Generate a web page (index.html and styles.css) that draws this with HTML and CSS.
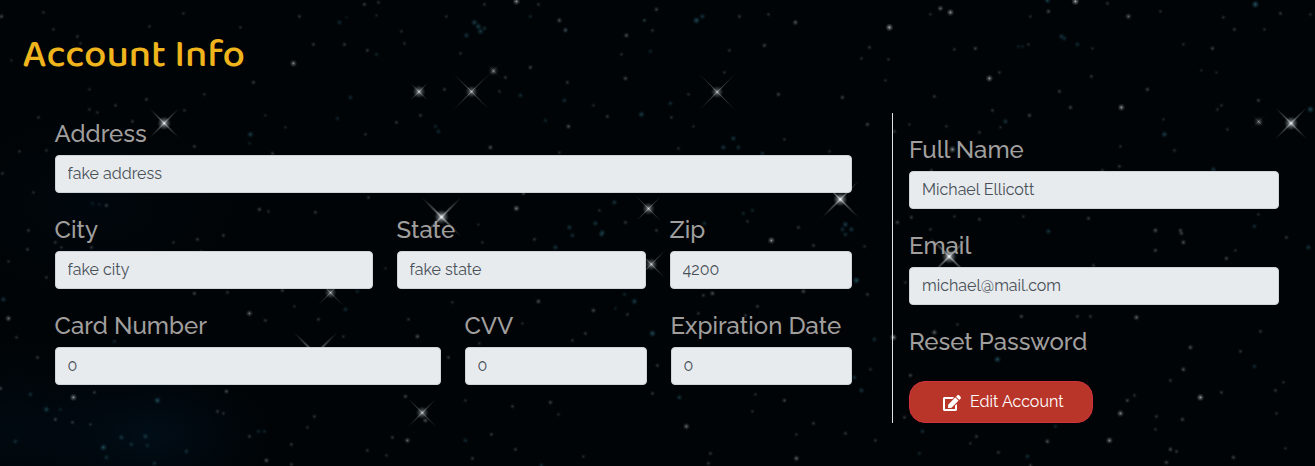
FILE: index.html
```html
<!DOCTYPE html>
<html lang="en">
<head>
<meta charset="utf-8">
<title>Account Info</title>
<link rel="stylesheet" href="styles.css">
</head>
<body>
<svg class="sky" id="sky" width="1315" height="466" viewBox="0 0 1315 466" aria-hidden="true">
  <defs>
    <radialGradient id="glow"><stop offset="0" stop-color="#fff"/><stop offset=".3" stop-color="#ccd4d8" stop-opacity=".55"/><stop offset="1" stop-color="#8a9499" stop-opacity="0"/></radialGradient>
    <radialGradient id="teal"><stop offset="0" stop-color="#357585"/><stop offset=".5" stop-color="#235564" stop-opacity=".5"/><stop offset="1" stop-color="#1d4d60" stop-opacity="0"/></radialGradient>
    <radialGradient id="spike"><stop offset="0" stop-color="#fff"/><stop offset=".4" stop-color="#aab0b4" stop-opacity=".5"/><stop offset="1" stop-color="#8a9094" stop-opacity="0"/></radialGradient>
    <radialGradient id="haze"><stop offset="0" stop-color="#031c30" stop-opacity=".4"/><stop offset="1" stop-color="#031525" stop-opacity="0"/></radialGradient>
  </defs>
  <ellipse cx="150" cy="435" rx="120" ry="75" fill="url(#haze)"/>
  <ellipse cx="15" cy="430" rx="120" ry="90" fill="url(#haze)" opacity=".6"/>
  <ellipse cx="90" cy="205" rx="150" ry="90" fill="url(#haze)" opacity=".35"/>
</svg>
<main class="account">
  <h1 class="title">Account Info</h1>
  <div class="columns">
    <form class="billing">
      <div class="row">
        <label class="field"><span class="label">Address</span><input class="control" value="fake address" disabled></label>
      </div>
      <div class="row row-place">
        <label class="field"><span class="label">City</span><input class="control" value="fake city" disabled></label>
        <label class="field"><span class="label">State</span><input class="control" value="fake state" disabled></label>
        <label class="field"><span class="label">Zip</span><input class="control" value="4200" disabled></label>
      </div>
      <div class="row row-card">
        <label class="field"><span class="label">Card Number</span><input class="control" value="0" disabled></label>
        <label class="field"><span class="label">CVV</span><input class="control" value="0" disabled></label>
        <label class="field"><span class="label">Expiration Date</span><input class="control" value="0" disabled></label>
      </div>
    </form>
    <section class="profile">
      <label class="field"><span class="label">Full Name</span><input class="control" value="Michael Ellicott" disabled></label>
      <label class="field"><span class="label">Email</span><input class="control" value="michael@mail.com" disabled></label>
      <span class="label">Reset Password</span>
      <button class="edit" type="button">
        <svg class="edit-icon" viewBox="0 0 576 512" width="18" height="16" aria-hidden="true"><path fill="currentColor" d="M402.6 83.2l90.2 90.2c3.8 3.8 3.8 10 0 13.8L274.4 405.6l-92.8 10.3c-12.4 1.4-22.9-9.1-21.5-21.5l10.3-92.8L388.8 83.2c3.8-3.8 10-3.8 13.8 0zm162-22.9l-48.8-48.8c-15.2-15.2-39.9-15.2-55.2 0l-35.4 35.4c-3.8 3.8-3.8 10 0 13.8l90.2 90.2c3.8 3.8 10 3.8 13.8 0l35.4-35.4c15.2-15.3 15.2-40 0-55.2zM384 346.2V448H64V128h229.8c3.2 0 6.2-1.3 8.5-3.5l40-40c7.6-7.6 2.2-20.5-8.5-20.5H48C21.5 64 0 85.5 0 112v352c0 26.5 21.5 48 48 48h352c26.5 0 48-21.5 48-48V306.2c0-10.7-12.9-16-20.5-8.5l-40 40c-2.2 2.3-3.5 5.3-3.5 8.5z"/></svg>
        <span class="edit-text">Edit Account</span>
      </button>
    </section>
  </div>
</main>
<script src="stars.js"></script>
</body>
</html>
```
FILE: styles.css
```css
* { box-sizing: border-box; }

body {
  margin: 0;
  height: 466px;
  overflow: hidden;
  background: #000407;
  font-family: Raleway, Lato, sans-serif;
  font-size: 16px;
}

.sky { position: absolute; inset: 0; z-index: -1; }

.account { padding: 30px 36px 0 22.5px; }

.title {
  margin: 0;
  height: 83px;
  font-family: "Baloo 2", Lato, sans-serif;
  font-size: 40px;
  font-weight: 500;
  line-height: 50px;
  color: #f0b41c;
}

.columns { display: flex; justify-content: space-between; }

.billing {
  width: 797px;
  margin-left: 32.1px;
  padding-top: 3px;
  display: flex;
  flex-direction: column;
  gap: 19px;
}

.row { display: grid; column-gap: 24px; }
.row-place { grid-template-columns: 318px 249px 182px; }
.row-card { grid-template-columns: 386px 182px 181px; }

.profile {
  width: 387px;
  height: 310px;
  padding: 19px 0 0 16px;
  border-left: 1px solid #dee2e6;
  display: flex;
  flex-direction: column;
  gap: 19px;
}

.field { display: flex; flex-direction: column; gap: 3px; }

.label {
  height: 36px;
  font-size: 24px;
  font-weight: 500;
  line-height: 36px;
  white-space: nowrap;
  color: #a09f9e;
}

.control {
  width: 100%;
  height: 38px;
  padding: 5px 12px 7px;
  border: 1px solid #ced4da;
  border-radius: 4px;
  background: #e7ebee;
  color: #495057;
  font: inherit;
}

.edit {
  width: 184px;
  height: 42px;
  margin-top: 2px;
  padding: 0 0 2px 33px;
  display: flex;
  align-items: center;
  gap: 9px;
  border: 1px solid #d0313d;
  border-radius: 16px;
  background: #b93529;
  color: #fff;
  font: inherit;
}

.edit-icon { margin-top: 3px; flex: none; }
.edit-text { white-space: nowrap; }
```
FILE: stars.js
```js
const NS = "http://www.w3.org/2000/svg";
const sky = document.getElementById("sky");

function add(name, attrs) {
  const el = document.createElementNS(NS, name);
  for (const key in attrs) el.setAttribute(key, attrs[key]);
  sky.appendChild(el);
}

// x y opacity
const faint = `1 16 .55 43 12 .3 53 29 .3 77 36 .35 80 43 .3 11 60 .2 149 26 .3 183 13 .3 240 27 .3 299 16 .4 364 4 .45 378 2 .35 376 15 .2 401 31 .3 404 43 .3 313 44 .4 344 44 .4 367 50 .4 293 63 .85 253 82 .45 204 94 .3 146 99 .4 89 89 .25 89 109 .3 97 112 .3 115 105 .35 38 117 .35 132 121 .4 184 110 .3 194 146 .4 272 153 .4 365 134 .3 396 122 .4 420 115 .4 265 115 .2 285 127 .2 19 151 .3 46 150 .3 2 173 .35 33 192 .3 259 209 .5 268 211 .3 315 212 .4 368 197 .35 28 230 .4 106 205 .45 61 247 .3 27 249 .4 8 261 .3 46 277 .35 8 318 .75 16 337 .35 37 357 .4 55 242 .35 91 247 .4 197 239 .4 173 242 .3 223 235 .4 201 251 .3 194 293 .5 227 292 .35 249 313 .75 265 320 .4 282 290 .45 318 319 .4 417 336 .6 408 319 .35 294 306 .25 343 336 .3 385 268 .2 0 388 .5 94 392 .4 73 397 .9 55 419 .45 72 422 .4 90 424 .3 226 391 .55 217 411 .4 223 413 .3 249 436 .4 314 416 .4 307 427 .3 291 444 .4 266 460 .6 291 464 .35 405 396 .5 392 437 .4 367 450 .35 386 455 .3 407 440 .7 425 420 .6 516 1 .9 484 4 .35 446 16 .3 559 20 .6 538 4 .35 565 30 .5 626 35 .6 652 30 .35 656 9 .5 644 20 .25 621 54 .3 460 53 .3 493 71 .6 530 67 .5 505 77 .4 567 82 .4 625 78 .55 499 91 .3 444 89 .4 593 105 .25 607 116 .4 568 126 .6 490 147 .6 559 152 .3 739 16 .4 768 14 .35 795 22 .65 764 45 .5 729 50 .35 869 47 .4 861 58 .3 724 72 .3 688 94 .3 671 117 .35 693 126 .25 778 94 .5 842 97 .5 867 124 .5 784 139 .3 678 148 .3 829 151 .3 516 208 .8 523 193 .5 599 210 .3 625 222 .4 478 224 .2 656 230 .4 798 227 .4 747 221 .3 771 240 .9 813 245 .4 482 242 .3 534 239 .4 712 293 .6 703 295 .4 803 291 .55 757 306 .4 698 313 .35 745 315 .4 867 294 .4 864 246 .3 538 301 .6 593 310 .55 627 314 .35 585 333 .4 572 340 .35 522 323 .25 479 343 .3 452 302 .3 448 357 .4 465 400 .3 512 406 .4 550 402 .5 558 414 .3 491 434 .4 515 449 .4 472 458 .4 583 456 .3 652 393 .4 657 365 .4 686 426 .75 784 400 .5 755 394 .3 752 411 .3 813 423 .4 845 433 .4 796 434 .3 710 453 .4 796 458 .7 708 463 .4 875 440 .35 870 369 .3 889 27 1 940 8 .7 950 12 .9 930 14 .3 1075 1 1 1048 11 .55 1107 3 .35 1128 16 .7 1030 16 .3 1160 11 .3 954 49 .35 975 48 .5 888 59 .3 885 80 .3 989 78 .9 999 72 .35 934 96 .4 1028 44 .3 1092 48 .25 1183 44 .3 1212 48 .5 1234 29 .4 1223 17 .35 1280 13 .4 1310 14 .3 1264 29 .3 1201 70 .2 1216 72 .2 1091 76 .4 1059 91 .45 1070 107 .5 1121 107 .9 1147 89 .5 992 110 .4 1029 115 .5 1258 100 .45 1221 105 .3 1217 109 .3 1163 119 .25 946 126 .3 1000 127 .25 909 124 .25 979 132 .35 894 131 .4 1227 129 .3 1259 122 .55 1120 146 .3 1174 150 .35 1119 166 .4 931 170 .4 1102 170 .35 952 149 .9 1155 230 .6 1088 218 .45 911 217 .45 897 222 .5 954 216 .3 979 219 .4 1023 216 .3 930 229 .35 1180 230 .5 1258 214 .3 1286 237 .4 1183 242 .6 1155 250 .5 1226 258 .5 1235 250 .3 1181 233 .5 1093 265 .4 905 282 .3 1021 316 .5 1077 316 .4 1090 316 .4 1136 317 .7 957 324 .3 893 337 .9 934 332 .7 1260 331 .4 1190 347 .6 1240 351 .4 1183 369 .6 1170 380 .4 1283 382 .3 1275 390 .4 1200 397 .95 1221 392 .4 1127 400 .5 1134 395 .35 1120 413 .85 1156 416 .4 1182 419 .5 1155 429 .3 1276 413 .3 1109 440 .85 1047 441 .6 998 452 .4 976 436 .4 970 443 .3 910 375 .5 904 417 .4 1170 449 .55 1176 451 .4 1285 448 .3 1233 457 .5 1166 462 .5 1030 465 .4`;
const blue = `339 22 .6 346 17 .25 376 54 .5 350 97 .6 337 118 .5 250 134 .8 438 131 .6 435 126 .5 249 143 .4 131 61 .4 92 203 .4 99 204 .3 474 22 .8 478 26 .8 480 31 .8 466 35 .7 484 28 .6 530 16 .5 565 29 .5 696 20 .9 702 16 .7 644 20 .4 650 51 .5 520 95 .6 564 100 .6 641 114 .8 545 120 .5 670 103 .6 733 138 .7 723 147 .7 738 147 .6 762 153 .6 614 202 .7 595 223 .7 602 232 .7 569 227 .7 704 223 .6 752 210 .5 743 213 .5 845 224 .8 851 229 .7 842 229 .6 555 247 .7 601 234 .7 572 235 .6 845 234 .6 624 294 .5 634 301 .8 652 333 .9 615 308 .4 856 280 .9 874 339 .6 854 377 .6 861 390 .7 679 397 .7 794 333 .5 465 440 .6 541 465 .6 3 299 .7 131 327 .6 114 341 .5 345 309 .6 357 291 .5 30 394 .6 46 409 .8 60 409 .4 157 400 .9 121 437 .7 145 436 .7 131 444 .6 147 445 .5 103 447 .9 106 457 .6 154 463 .6 186 451 .6 15 441 .6 258 431 .5 264 431 .5 1047 0 .8 1255 4 1 1018 46 .4 1022 46 .4 1061 36 .7 1064 38 .6 1077 44 .6 1005 121 .7 1164 134 .8 1310 109 .9 1213 169 .7 1048 231 .7 1254 226 .6 1308 247 .7 997 359 .9 1254 366 .6 922 431 .6 1055 426 .5 1027 456 .6 919 453 .5`;

function scatter(text, fill, radius) {
  const v = text.split(" ").map(Number);
  for (let i = 0; i < v.length; i += 3) {
    const o = v[i + 2];
    add("circle", { cx: v[i] + .4, cy: v[i + 1] + .4, r: radius + o * 2, fill, opacity: .12 + o * o * .62 });
  }
}
scatter(faint, "url(#glow)", 2.2);
scatter(blue, "url(#teal)", 2.2);

// Bright stars with diagonal spikes: x, y, spike length, opacity
[
  [164.2, 123.2, 15, .8], [419, 91.7, 9, .65], [471.5, 91.7, 19, .55],
  [717.2, 92, 19, .55], [441.5, 217, 20, 1], [648.5, 208.7, 13, .6],
  [840.3, 199.3, 19, .9], [651.3, 264.3, 15, .6], [330.5, 292.7, 14, .5],
  [315.5, 354, 22, 1], [422.2, 412.7, 15, .6], [949.2, 256.5, 20, 1],
  [1291, 123.3, 16, .85], [493.5, 70.7, 9, .2], [1258.5, 121.5, 9, .2]
].forEach(([x, y, s, o]) => {
  const t = .7 + o * o * 1.1;
  for (const angle of [45, 135]) {
    add("ellipse", { cx: x, cy: y, rx: s * 1.42, ry: t, fill: "url(#spike)", opacity: o * .8, transform: `rotate(${angle} ${x} ${y})` });
  }
  add("circle", { cx: x, cy: y, r: 5 + o * 2.5, fill: "url(#glow)", opacity: Math.min(1, o + .1) });
});
```
